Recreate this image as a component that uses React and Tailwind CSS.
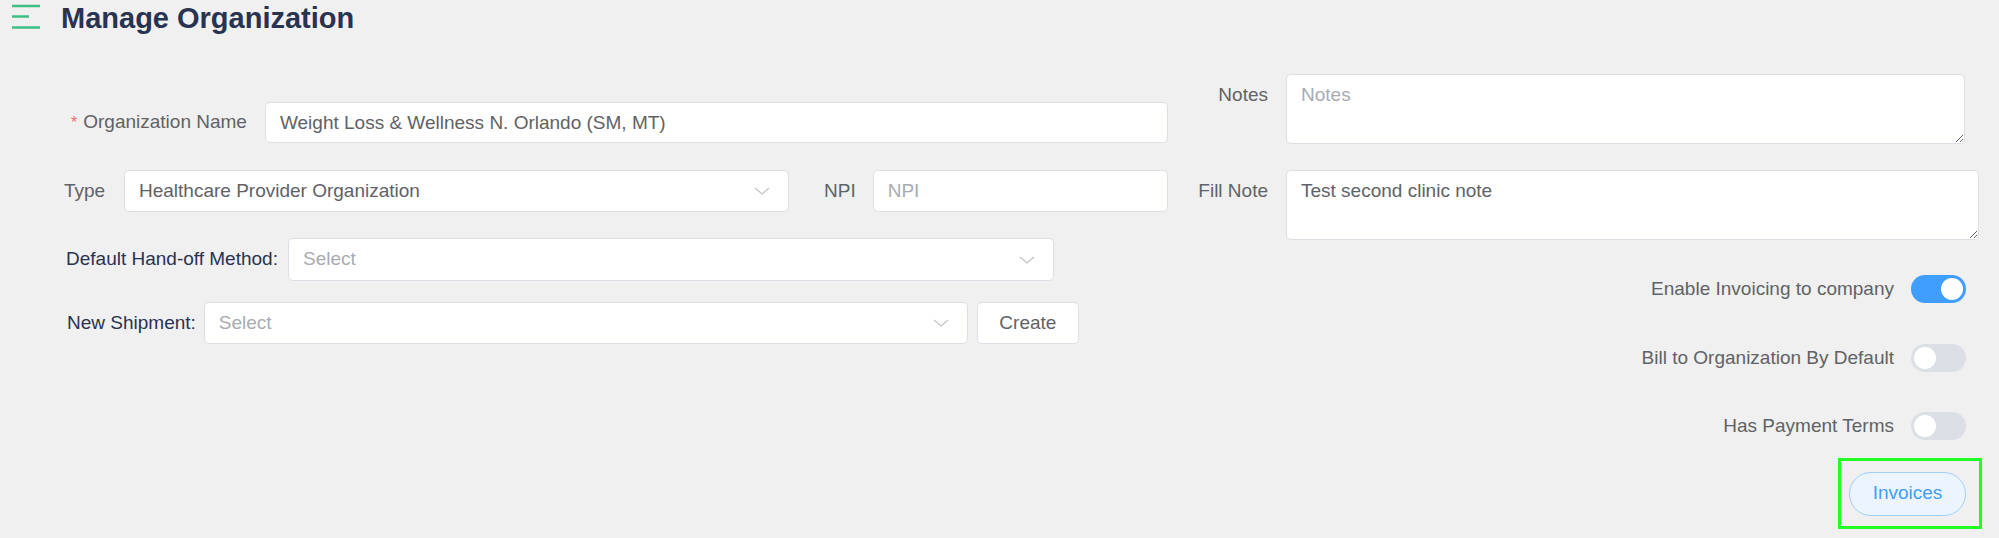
import React, { useState } from "react";

const inputBox =
  "h-[41px] bg-white border border-[#dcdfe6] rounded-[5px] flex items-center px-[14px] text-[19px] text-[#606266]";

function Chevron() {
  return (
    <svg width="16" height="8" viewBox="0 0 16 8" className="shrink-0">
      <path d="M1 1 L8 7 L15 1" fill="none" stroke="#c0c4cc" strokeWidth="1.3" />
    </svg>
  );
}

function Select({ value, placeholder, className }) {
  return (
    <div className={`${inputBox} justify-between pr-[18px] ${className}`}>
      <span className={value ? "text-[#606266]" : "text-[#a8abb2]"}>{value || placeholder}</span>
      <Chevron />
    </div>
  );
}

function Toggle({ on, onChange }) {
  return (
    <button
      onClick={onChange}
      className={`w-[55px] h-[28px] rounded-full p-[3px] flex items-center transition-colors ${
        on ? "bg-[#409eff] justify-end" : "bg-[#dcdfe6] justify-start"
      }`}
    >
      <span className="w-[22px] h-[22px] rounded-full bg-white block" />
    </button>
  );
}

export default function App() {
  const [invoicing, setInvoicing] = useState(true);
  const [billDefault, setBillDefault] = useState(false);
  const [paymentTerms, setPaymentTerms] = useState(false);

  const toggles = [
    { label: "Enable Invoicing to company", on: invoicing, set: setInvoicing },
    { label: "Bill to Organization By Default", on: billDefault, set: setBillDefault },
    { label: "Has Payment Terms", on: paymentTerms, set: setPaymentTerms },
  ];

  return (
    <div className="min-h-screen bg-[#f0f0f0] font-['Liberation_Sans',Arial,sans-serif]">
      {/* header */}
      <div className="h-[34px] flex items-center pl-[12px] gap-[21px]">
        <svg width="28" height="34" viewBox="0 0 28 34" className="shrink-0">
          <g stroke="#3dbf84" strokeWidth="2.5">
            <line x1="0" y1="6" x2="28" y2="6" />
            <line x1="0" y1="16.5" x2="17" y2="16.5" />
            <line x1="0" y1="27.5" x2="28" y2="27.5" />
          </g>
        </svg>
        <h1 className="text-[29px] leading-none font-bold text-[#283350] pt-[2px]">Manage Organization</h1>
      </div>

      <div className="flex pt-[40px]">
        {/* left column */}
        <div className="w-[1168px] shrink-0 pl-[64px] mt-[28px] flex flex-col text-[19px]">
          <div className="flex items-center pl-[7px]">
            <span className="text-[#f56c6c] mr-[6px] text-[16px]">*</span>
            <span className="text-[#606266] mr-[18px]">Organization Name</span>
            <input
              defaultValue="Weight Loss & Wellness N. Orlando (SM, MT)"
              className={`${inputBox} flex-1 outline-none`}
            />
          </div>

          <div className="flex items-center mt-[27px]">
            <span className="text-[#606266] w-[60px]">Type</span>
            <Select value="Healthcare Provider Organization" className="w-[665px] h-[42px]" />
            <span className="text-[#606266] ml-[35px] mr-[17px]">NPI</span>
            <input placeholder="NPI" className={`${inputBox} flex-1 h-[42px] outline-none placeholder:text-[#a8abb2]`} />
          </div>

          <div className="flex items-center mt-[26px] pl-[2px]">
            <span className="text-[#283350] mr-[10px]">Default Hand-off Method:</span>
            <Select placeholder="Select" className="w-[766px] h-[43px]" />
          </div>

          <div className="flex items-center mt-[21px] pl-[3px]">
            <span className="text-[#283350] mr-[8px]">New Shipment:</span>
            <Select placeholder="Select" className="w-[764px] h-[42px]" />
            <button className="ml-[9px] w-[102px] h-[42px] bg-white border border-[#dcdfe6] rounded-[5px] text-[19px] text-[#606266]">
              Create
            </button>
          </div>
        </div>

        {/* right column */}
        <div className="flex-1 pr-[20px] flex flex-col text-[19px]">
          <div className="flex items-start">
            <span className="w-[118px] shrink-0 text-right pr-[18px] pt-[7px] leading-[28px] text-[#606266]">Notes</span>
            <textarea
              placeholder="Notes"
              className="w-[679px] h-[70px] bg-white border border-[#dcdfe6] rounded-[5px] px-[14px] py-[6px] leading-[28px] text-[#606266] outline-none placeholder:text-[#a8abb2]"
            />
          </div>
          <div className="flex items-start mt-[26px]">
            <span className="w-[118px] shrink-0 text-right pr-[18px] pt-[7px] leading-[28px] text-[#606266]">Fill Note</span>
            <textarea
              defaultValue="Test second clinic note"
              className="flex-1 h-[70px] bg-white border border-[#dcdfe6] rounded-[5px] px-[14px] py-[6px] leading-[28px] text-[#606266] outline-none"
            />
          </div>

          <div className="flex flex-col items-end mr-[13px] mt-[35px] gap-[40px]">
            {toggles.map((t) => (
              <div key={t.label} className="flex items-center gap-[17px]">
                <span className="text-[#606266]">{t.label}</span>
                <Toggle on={t.on} onChange={() => t.set(!t.on)} />
              </div>
            ))}
          </div>

          <div className="flex justify-end mr-[13px] mt-[31px]">
            <button className="relative w-[117px] h-[44px] rounded-full bg-[#ecf5ff] border border-[#a0cfff] text-[19px] text-[#409eff]">
              Invoices
              <span className="absolute -left-[12px] -right-[17px] -top-[15px] -bottom-[14px] border-[3px] border-[#22ff22]" />
            </button>
          </div>
        </div>
      </div>
    </div>
  );
}
